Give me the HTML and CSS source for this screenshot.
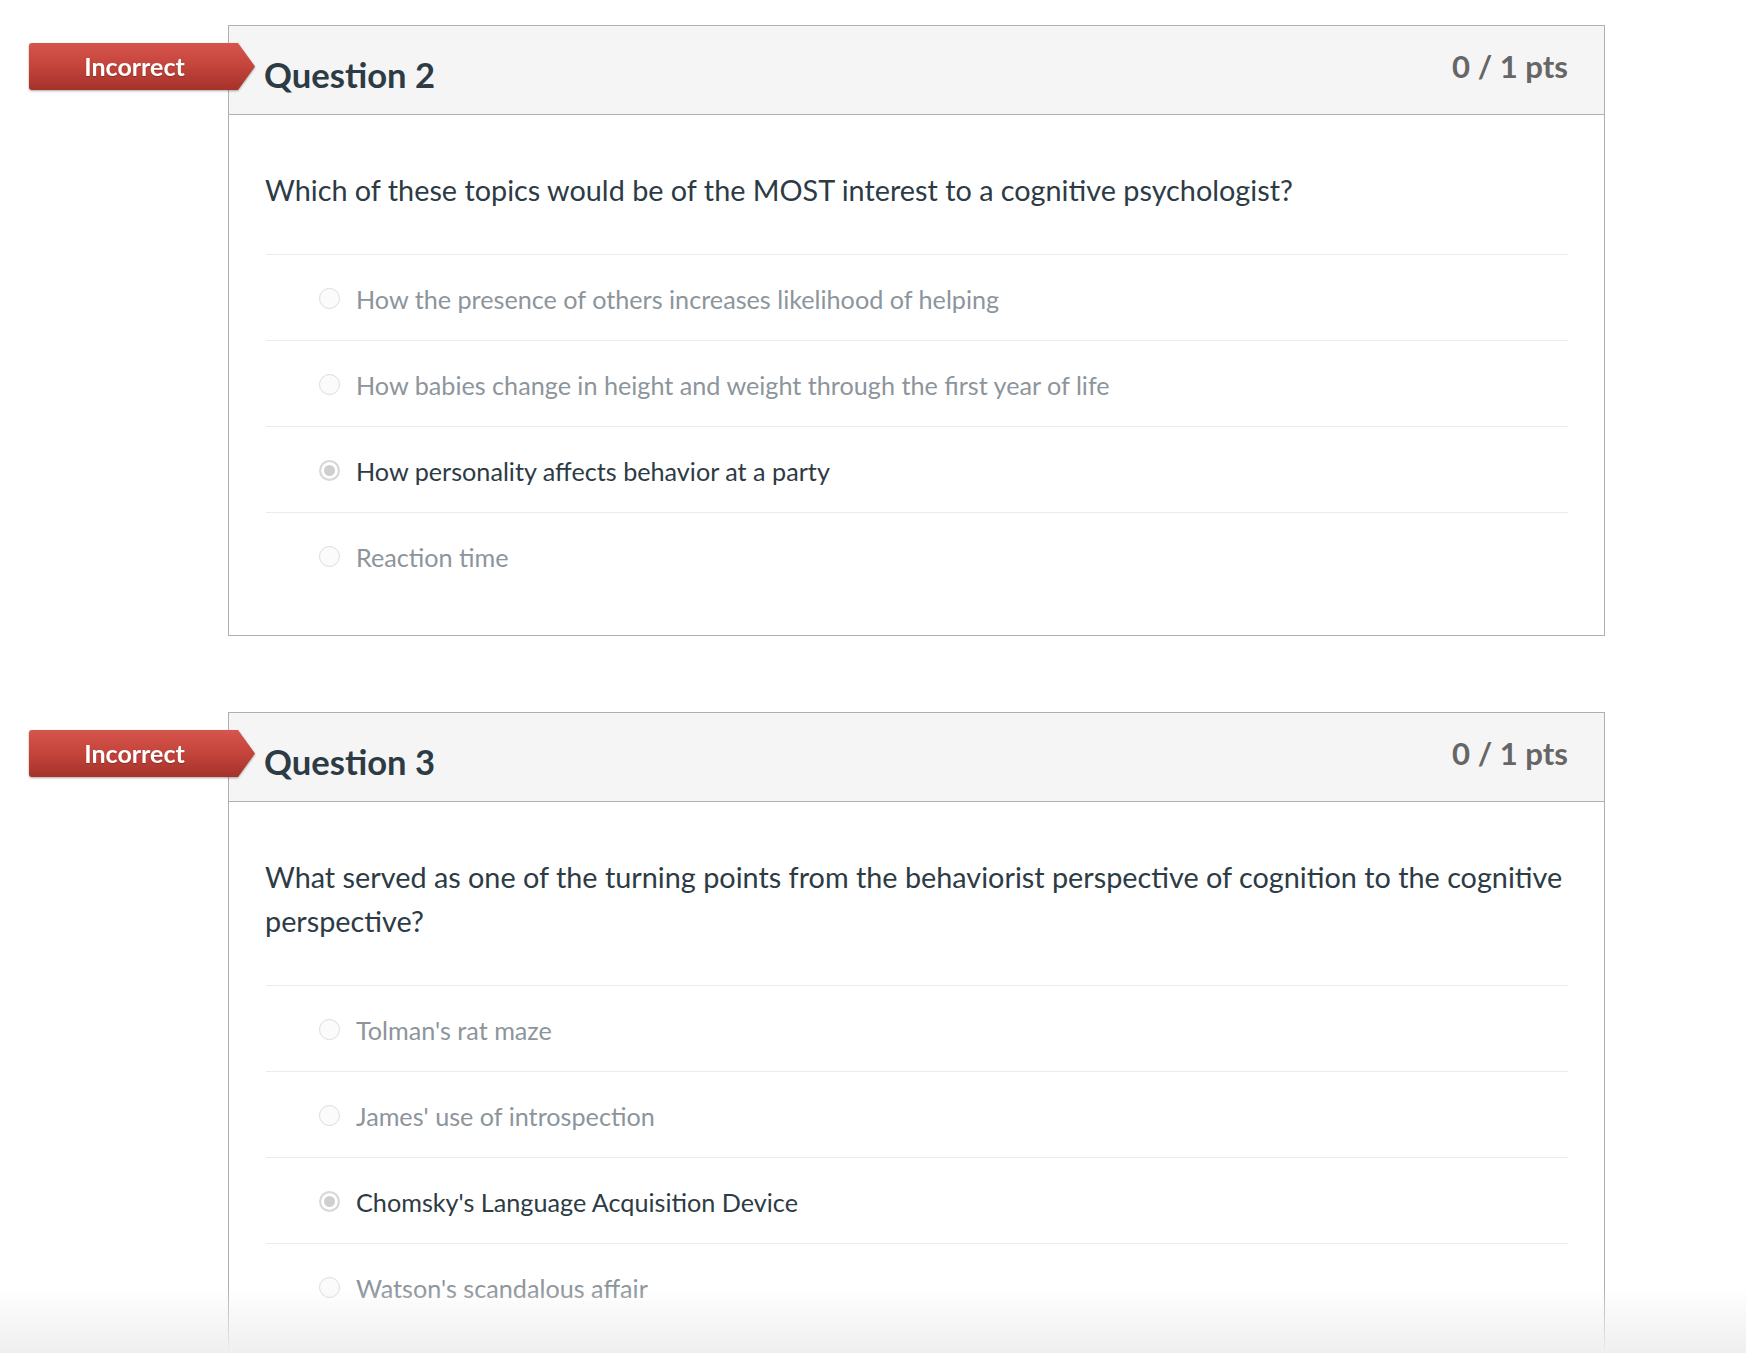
FILE: index.html
```html
<!DOCTYPE html>
<html lang="en">
<head>
<meta charset="utf-8">
<title>Quiz results</title>
<link rel="stylesheet" href="styles.css">
</head>
<body>
<div class="quiz">
  <div class="question">
    <div class="badge-wrap"><div class="badge">Incorrect</div></div>
    <div class="q-header">
      <h2 class="q-title">Question 2</h2>
      <div class="q-points">0 / 1 pts</div>
    </div>
    <div class="q-body">
      <p class="q-text">Which of these topics would be of the MOST interest to a cognitive psychologist?</p>
      <div class="answers">
        <div class="answer"><span class="radio"></span><span class="a-text">How the presence of others increases likelihood of helping</span></div>
        <div class="answer"><span class="radio"></span><span class="a-text">How babies change in height and weight through the first year of life</span></div>
        <div class="answer selected"><span class="radio"></span><span class="a-text">How personality affects behavior at a party</span></div>
        <div class="answer"><span class="radio"></span><span class="a-text">Reaction time</span></div>
      </div>
    </div>
  </div>

  <div class="question">
    <div class="badge-wrap"><div class="badge">Incorrect</div></div>
    <div class="q-header">
      <h2 class="q-title">Question 3</h2>
      <div class="q-points">0 / 1 pts</div>
    </div>
    <div class="q-body">
      <p class="q-text">What served as one of the turning points from the behaviorist perspective of cognition to the cognitive perspective?</p>
      <div class="answers">
        <div class="answer"><span class="radio"></span><span class="a-text">Tolman's rat maze</span></div>
        <div class="answer"><span class="radio"></span><span class="a-text">James' use of introspection</span></div>
        <div class="answer selected"><span class="radio"></span><span class="a-text">Chomsky's Language Acquisition Device</span></div>
        <div class="answer"><span class="radio"></span><span class="a-text">Watson's scandalous affair</span></div>
      </div>
    </div>
  </div>
</div>
<div class="bottom-fade"></div>
</body>
</html>
```

FILE: styles.css
```css
html, body {
  margin: 0;
  padding: 0;
  background: #ffffff;
  font-family: Lato, "Open Sans", "Liberation Sans", sans-serif;
  color: #2d3b45;
}

body {
  height: 1353px;
  overflow: hidden;
}

.quiz {
  margin-left: 228px;
  width: 1377px;
  padding-top: 25px;
}

.question {
  position: relative;
  box-sizing: border-box;
  width: 1377px;
  border: 1px solid #b0b0b0;
  margin-bottom: 76px;
}

.badge-wrap {
  position: absolute;
  left: -200px;
  top: 17px;
  filter: drop-shadow(0 1px 1px rgba(0, 0, 0, 0.35));
}

.badge {
  width: 226px;
  height: 47px;
  box-sizing: border-box;
  padding-right: 15px;
  background: linear-gradient(to bottom, #d6554c 0%, #c3443b 50%, #a5322a 100%);
  clip-path: polygon(0 0, 209px 0, 226px 50%, 209px 100%, 0 100%);
  border-radius: 3px 0 0 3px;
  color: #ffffff;
  font-weight: 700;
  font-size: 25px;
  line-height: 46px;
  text-align: center;
  text-shadow: 0 1px 1px rgba(0, 0, 0, 0.25);
}

.q-header {
  height: 88px;
  background: #f5f5f5;
  border-bottom: 1px solid #b0b0b0;
  display: flex;
  justify-content: space-between;
  align-items: flex-start;
  padding: 0 36px 0 35px;
}

.q-title {
  margin: 27px 0 0;
  font-size: 34.6px;
  font-weight: 700;
  line-height: 43px;
  color: #2d3b45;
}

.q-points {
  margin-top: 21px;
  font-size: 31.1px;
  font-weight: 700;
  line-height: 38px;
  color: #666666;
}

.q-body {
  padding: 53px 36px 37px 37px;
}

.q-text {
  margin: 0 0 42px -1px;
  font-size: 28.8px;
  line-height: 44px;
  color: #2d3b45;
}

.answer {
  display: flex;
  align-items: center;
  height: 83px;
  padding-top: 2px;
  border-top: 1px solid #e9ebec;
  padding-left: 53px;
}

.radio {
  flex: none;
  width: 21px;
  height: 21px;
  box-sizing: border-box;
  border-radius: 50%;
  border: 1px solid #dcdcdc;
  background: #fbfbfb;
  margin-right: 16px;
}

.answer.selected .radio {
  border: 2px solid #d8d8d8;
  background: #cfcfcf;
  box-shadow: inset 0 0 0 3px #ffffff;
}

.a-text {
  font-size: 25.2px;
  line-height: 32px;
  color: #8d959c;
}

.answer.selected .a-text {
  color: #2d3b45;
}

.bottom-fade {
  position: fixed;
  left: 0;
  right: 0;
  bottom: 0;
  height: 66px;
  background: linear-gradient(to bottom, rgba(240, 240, 240, 0) 0%, #efefef 100%);
  pointer-events: none;
}
```
